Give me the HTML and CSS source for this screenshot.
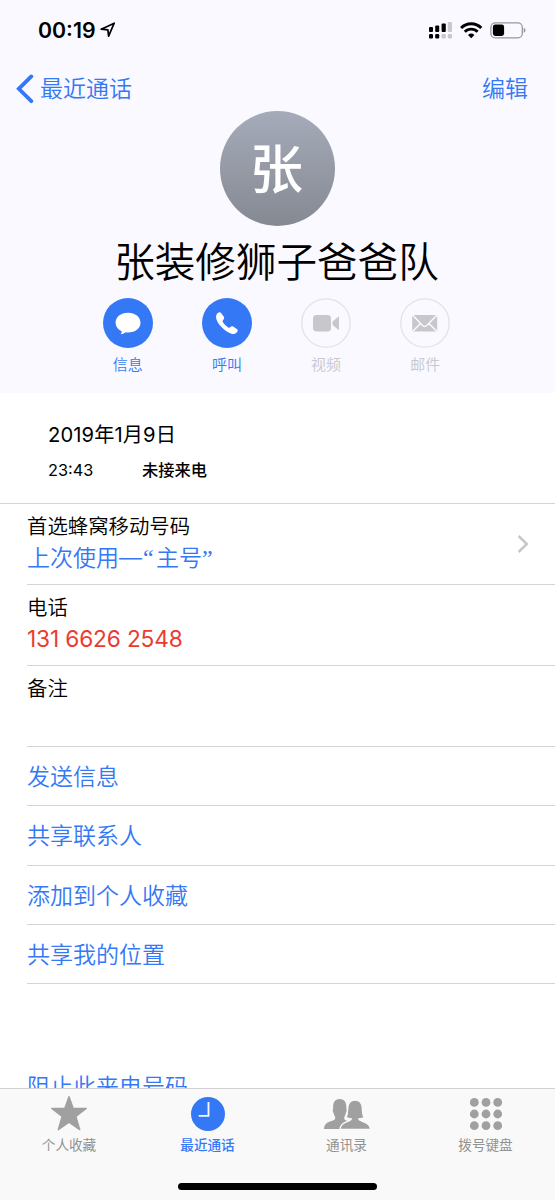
FILE: index.html
```html
<!DOCTYPE html>
<html lang="zh-CN">
<head>
<meta charset="utf-8">
<title>联系人</title>
<link rel="stylesheet" href="styles.css">
</head>
<body>
<div class="phone">
  <header class="header">
    <div class="status">
      <span class="clock">00:19</span>
      <svg class="locate" width="16" height="16" viewBox="0 0 16 16"><path d="M1.200 7.200 14.200 1.200 8.600 14.200 7.900 7.800Z" fill="none" stroke="#000" stroke-width="1.700" stroke-linejoin="round"/></svg>
      <svg class="signals" width="100" height="20" viewBox="0 0 100 20">
        <g fill="#000">
          <rect x="1" y="7" width="4" height="5" rx="1"/><rect x="7.200" y="5.500" width="4" height="6.500" rx="1"/><rect x="13.600" y="3.600" width="4.200" height="8.400" rx="1"/>
          <rect x="1" y="14" width="4" height="4.500" rx="1.200"/><rect x="7.200" y="14" width="4" height="4.500" rx="1.200"/>
        </g>
        <g fill="#c9c9cd"><rect x="19.800" y="2" width="4.200" height="10" rx="1"/><rect x="13.600" y="14" width="4.200" height="4.500" rx="1.200"/><rect x="19.800" y="14" width="4.200" height="4.500" rx="1.200"/></g>
        <g fill="none" stroke="#000" stroke-width="2.900"><path d="M33.100 7.900a14.200 14.200 0 0 1 20.200 0"/><path d="M36.800 11.800a9 9 0 0 1 12.800 0"/></g>
        <path d="M40 15a4.700 4.700 0 0 1 6.400 0L43.200 18.200Z" fill="#000"/>
        <rect x="62.900" y="2.800" width="31.400" height="15" rx="4.400" fill="none" stroke="#98989c" stroke-width="1.300"/>
        <rect x="64.900" y="4.600" width="11.200" height="11.400" rx="2.400" fill="#000"/>
        <path d="M95.700 7.700v5.200q1.800-.8 1.800-2.600t-1.800-2.600Z" fill="#98989c"/>
      </svg>
    </div>
    <nav class="nav">
      <a class="back"><svg width="18" height="30" viewBox="0 0 18 30"><path d="M15.300 2.400 2.800 14.800 15.300 27.200" fill="none" stroke="#3478f6" stroke-width="3.800" stroke-linecap="round" stroke-linejoin="miter"/></svg><span>最近通话</span></a>
      <a class="edit">编辑</a>
    </nav>
    <div class="avatar"><span>张</span></div>
    <h1 class="name">张装修狮子爸爸队</h1>
    <div class="actions">
      <div class="action">
        <svg width="50" height="50" viewBox="0 0 50 50"><circle cx="25" cy="25" r="25" fill="#3478f6"/><path d="M25 14.700c7.200 0 12.500 4.300 12.500 10s-5.300 9.800-12.500 9.800c-1 0-1.600 0-2.400-.2-1.300 1.300-3.300 2-5 2 .9-1 1.100-2 1-3.200-3.600-1.700-6-4.800-6-8.400 0-5.700 5.200-10 12.400-10Z" fill="#fff"/></svg>
        <span>信息</span>
      </div>
      <div class="action">
        <svg width="50" height="50" viewBox="0 0 50 50"><circle cx="25" cy="25" r="25" fill="#3478f6"/><path d="M14.300 17.200c.4-1.400 1.700-2.600 2.900-2.900.8-.2 1.500.2 2.100 1l2.500 3.500c.6.900.5 1.700-.1 2.400l-.8 1.100c-.4.600-.4 1-.1 1.600 1.200 2 3.400 4.200 5.400 5.500.6.400 1.100.4 1.600 0l1.300-.8c.7-.5 1.600-.5 2.400.1l3.300 2.300c.9.600 1.100 1.400.6 2.500-.7 1.600-2.200 2.500-4.100 2.500-5.700-.3-16.500-9.600-17.200-16.300-.1-.9 0-1.700.2-2.500Z" fill="#fff"/></svg>
        <span>呼叫</span>
      </div>
      <div class="action off">
        <svg width="50" height="50" viewBox="0 0 50 50"><circle cx="25" cy="25" r="24.200" fill="none" stroke="#e2e2e7" stroke-width="1.300"/><rect x="12" y="17" width="18" height="16.500" rx="3.500" fill="#c7c7cc"/><path d="M31.500 23.500 38 18.300V32.200L31.500 27Z" fill="#c7c7cc"/></svg>
        <span>视频</span>
      </div>
      <div class="action off">
        <svg width="50" height="50" viewBox="0 0 50 50"><circle cx="25" cy="25" r="24.200" fill="none" stroke="#e2e2e7" stroke-width="1.300"/><rect x="12.200" y="17" width="25" height="16.500" fill="#c7c7cc"/><path d="M12.200 16.800 22.500 27.500q2.200 1.800 4.400 0L37.200 16.800M12.200 33.700 20.600 25.500M37.200 33.700 28.800 25.500" fill="none" stroke="#f9f9ff" stroke-width="1.500"/></svg>
        <span>邮件</span>
      </div>
    </div>
  </header>
  <main class="content">
    <section class="calls">
      <div class="date">2019年1月9日</div>
      <div class="call"><span class="time">23:43</span><b>未接来电</b></div>
    </section>
    <section class="list">
      <div class="row detail"><div><div class="label">首选蜂窝移动号码</div><div class="value">上次使用<span class="dash">—</span><span class="quote open">“</span>主号<span class="quote">”</span></div></div>
        <svg class="chevron" width="12" height="20" viewBox="0 0 12 20"><path d="M1.600 2 9.800 10 1.600 18" fill="none" stroke="#c7c7cc" stroke-width="2.500"/></svg></div>
      <div class="row detail"><div><div class="label">电话</div><div class="value missed">131 6626 2548</div></div></div>
      <div class="row detail"><div class="label">备注</div></div>
      <div class="row link">发送信息</div>
      <div class="row link">共享联系人</div>
      <div class="row link">添加到个人收藏</div>
      <div class="row link">共享我的位置</div>
    </section>
    <div class="block">阻止此来电号码</div>
  </main>
  <footer class="tabbar">
    <div class="tabs">
      <div class="tab"><svg width="50" height="36" viewBox="0 0 50 36"><path d="M25 1.800 29.100 13.300 42.200 13.400 31.800 21.500 35.700 34.600 25 27.200 14.300 34.600 18.200 21.500 7.800 13.400 20.900 13.300Z" fill="#a0a0a0" stroke="#a0a0a0" stroke-width="1.500" stroke-linejoin="round"/></svg><span>个人收藏</span></div>
      <div class="tab active"><svg width="50" height="36" viewBox="0 0 50 36"><circle cx="25" cy="19" r="17" fill="#3478f6"/><path d="M25.500 7V20.900H15.700" fill="none" stroke="#f4f7ff" stroke-width="1.900"/></svg><span>最近通话</span></div>
      <div class="tab"><svg width="50" height="36" viewBox="0 0 50 36"><g fill="#a0a0a0"><path d="M2 34c.3-4.500 2.500-6.300 6-7.500 3.500-1.200 5.300-1.700 5.300-3.500 0-1.500-1.200-2.500-1.700-5-1-1.200-1.100-3.500-.4-4C10.700 7.500 12.800 4 17.600 4c5 0 7.200 3.500 6.700 10 .7.500.5 2.800-.5 4-.4 2.500-1.600 3.500-1.600 5 0 1.900 1.300 2.300 3.500 3.200L20 34Z"/><path d="M18 34.500c.3-4.500 2.500-6.200 6.500-7.600 2.800-1 4.500-1.500 4.900-3-2 0-3.900-.5-5.400-1.500 1.700-2.600 1.500-5.200 1.800-9.400.4-5 3-7.800 7.200-7.800 4.500 0 7 2.800 7.300 7.800.3 4.200 0 6.800 2 9.400-1.400 1-3.300 1.500-5.500 1.500.4 1.500 2 2 4.900 3 4 1.400 6.500 3.100 6.700 7.600Z" stroke="#f9f9f9" stroke-width="1.300"/></g><rect y="34" width="50" height="2" fill="#f9f9f9"/></svg><span>通讯录</span></div>
      <div class="tab"><svg width="50" height="36" viewBox="0 0 50 36"><g fill="#a0a0a0"><circle cx="13.300" cy="7.400" r="4.400"/><circle cx="25" cy="7.400" r="4.400"/><circle cx="36.700" cy="7.400" r="4.400"/><circle cx="13.300" cy="19" r="4.400"/><circle cx="25" cy="19" r="4.400"/><circle cx="36.700" cy="19" r="4.400"/><circle cx="13.300" cy="30.700" r="4.400"/><circle cx="25" cy="30.700" r="4.400"/><circle cx="36.700" cy="30.700" r="4.400"/></g></svg><span>拨号键盘</span></div>
    </div>
    <div class="home"></div>
  </footer>
</div>
</body>
</html>
```
FILE: styles.css
```css
* { box-sizing: border-box; }
body { margin: 0; background: #fff; color: #000; font-family: Inter, "Noto Sans CJK SC", sans-serif; font-weight: 350; }
svg { display: block; flex: none; }
.phone { width: 555px; height: 1200px; display: flex; flex-direction: column; overflow: hidden; }
.header { height: 393px; flex: none; background: #f9f9ff; display: flex; flex-direction: column; align-items: center; }
.status { width: 100%; height: 60px; padding: 20px 27px 0 38px; display: flex; align-items: flex-start; }
.clock { font-size: 21.300px; line-height: 21px; font-weight: 600; width: 62px; white-space: nowrap; }
.locate { margin-top: 2px; }
.signals { margin-left: auto; }
.nav { width: 100%; height: 51px; padding: 14px 27px 0 16px; display: flex; justify-content: space-between; color: #3478f6; font-size: 23px; line-height: 30px; }
.back { display: flex; gap: 6px; }
.avatar { width: 115px; height: 115px; flex: none; border-radius: 50%; background: linear-gradient(#a5abb9, #858992); color: #fff; font-size: 53px; line-height: 119px; font-weight: 500; text-align: center; padding-right: 2px; }
.name { margin: 9px 2px 0 0; font-size: 40.600px; line-height: 56px; font-weight: 350; white-space: nowrap; }
.actions { display: flex; gap: 49.200px; margin: 7px 2px 0 0; }
.action { width: 50px; color: #3478f6; font-size: 15px; line-height: 20px; text-align: center; }
.action span { display: block; margin-top: 7px; }
.off { color: #c7c7cc; }
.content { height: 695px; overflow: hidden; }
.calls { height: 111px; padding: 29px 48px 0; border-bottom: 1px solid #d4d4d6; }
.date { font-size: 20.200px; line-height: 26px; font-weight: 400; letter-spacing: .1px; }
.call { display: flex; margin-top: 12px; font-size: 16.300px; line-height: 20px; }
.time { width: 94px; font-weight: 400; }
.call b { font-weight: 500; }
.list { margin-left: 27px; }
.row { border-bottom: 1px solid #d4d4d6; }
.detail { height: 81px; padding: 8px 26px 0 0; display: flex; justify-content: space-between; }
.label { font-size: 20.400px; line-height: 30px; }
.value { font-size: 23px; line-height: 32px; color: #3478f6; }
.dash { display: inline-block; width: 24px; }
.quote { display: inline-block; width: 11px; font-family: "Liberation Serif", serif; font-size: 24px; line-height: 1; }
.open { margin-right: 2px; }
.missed { color: #eb3b2f; font-weight: 400; font-size: 22.700px; letter-spacing: -.15px; }
.chevron { margin-top: 22px; }
.link { height: 59.300px; font-size: 23px; line-height: 60px; color: #3478f6; }
.block { padding: 86px 27px 0; font-size: 23px; line-height: 34px; color: #3478f6; }
.tabbar { height: 112px; flex: none; background: #f9f9f9; border-top: 1px solid #d2d2d4; display: flex; flex-direction: column; align-items: center; }
.tabs { width: 100%; height: 94px; display: grid; grid-template-columns: 138px repeat(3, 139px); padding-top: 6px; }
.tab { display: flex; flex-direction: column; align-items: center; color: #929292; font-size: 13.600px; line-height: 18px; gap: 5px; font-weight: 400; }
.active { color: #3478f6; font-weight: 500; }
.home { width: 199px; height: 7px; border-radius: 4px; background: #000; }
```
